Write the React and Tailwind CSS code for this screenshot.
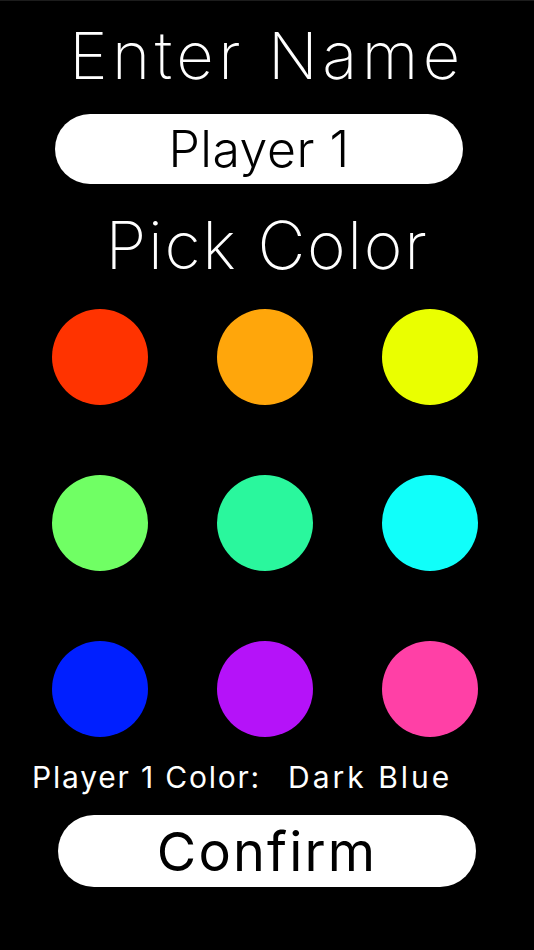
import React, { useState } from "react";

const COLORS = [
    { name: "Red", hex: "bg-[#ff3300]" },
    { name: "Orange", hex: "bg-[#ffa60b]" },
    { name: "Yellow", hex: "bg-[#eaff00]" },
    { name: "Green", hex: "bg-[#70ff64]" },
    { name: "Teal", hex: "bg-[#2af79d]" },
    { name: "Cyan", hex: "bg-[#10fffa]" },
    { name: "Dark Blue", hex: "bg-[#001fff]" },
    { name: "Purple", hex: "bg-[#b512f9]" },
    { name: "Pink", hex: "bg-[#ff40a6]" },
];

const App = () => {
    const [name, setName] = useState("Player 1");
    const [picked, setPicked] = useState("Dark Blue");

    return (
        <div
            className="min-h-screen w-full bg-black flex flex-col items-center border-t border-[#1c1c1c]"
            style={{ fontFamily: "Inter, 'Noto Sans', sans-serif" }}
        >
            <h1 className="mt-[20px] h-[70px] leading-[70px] text-[65px] font-extralight tracking-[0.07em] text-white">
                Enter Name
            </h1>

            <div className="self-start ml-[55px] mt-[23px] w-[408px] h-[70px] rounded-full bg-white flex items-center justify-center">
                <input
                    value={name}
                    onChange={(e) => setName(e.target.value)}
                    className="w-full bg-transparent text-center text-[50px] font-light tracking-[0.01em] text-black outline-none"
                />
            </div>

            <h2 className="mt-[26px] h-[70px] leading-[70px] text-[66px] font-extralight tracking-[0.025em] text-white">
                Pick Color
            </h2>

            <div className="mt-[29px] w-full pl-[17px] pr-[22px] grid grid-cols-3 gap-y-[70px]">
                {COLORS.map((c) => (
                    <div key={c.name} className="flex justify-center">
                        <button
                            onClick={() => setPicked(c.name)}
                            className={`w-[96px] h-[96px] rounded-full ${c.hex}`}
                        />
                    </div>
                ))}
            </div>

            <div className="self-start mt-[20px] pl-[32px] h-[40px] flex items-center text-[30px] text-white">
                <span className="tracking-[0.06em]">Player 1 Color:</span>
                <span className="ml-[27px] tracking-[0.1em]">{picked}</span>
            </div>

            <button className="mt-[18px] w-[418px] h-[72px] rounded-full bg-white flex items-center justify-center text-[54px] tracking-[0.04em] text-black">
                Confirm
            </button>
        </div>
    );
};

export default App;
